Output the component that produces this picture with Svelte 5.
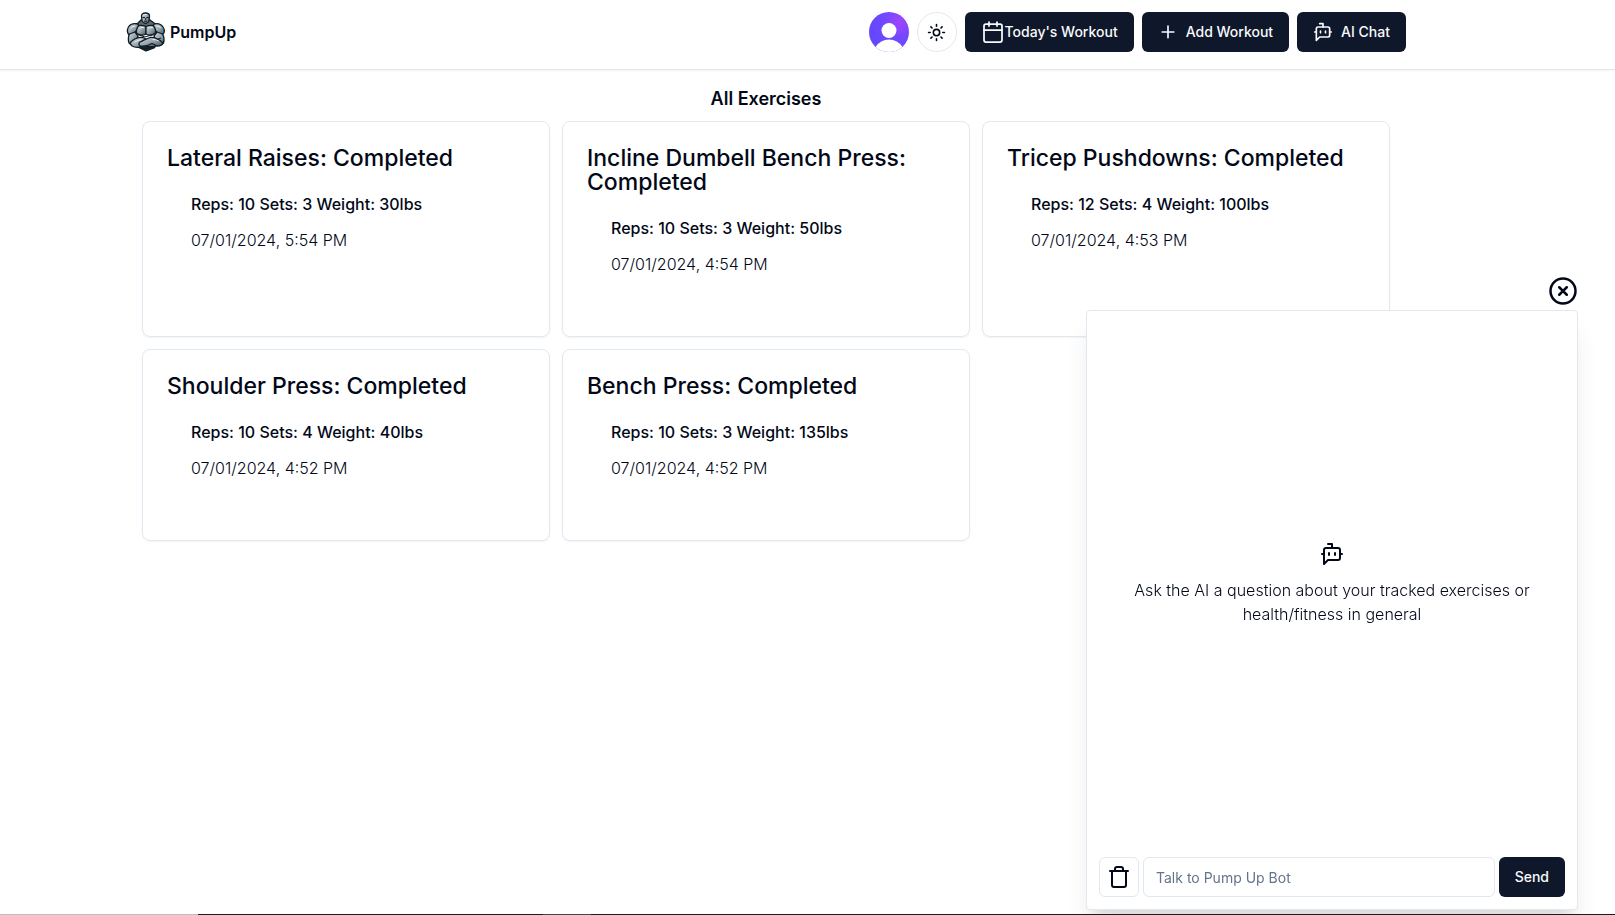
<script>
  const exercises = [
    { name: 'Lateral Raises', reps: 10, sets: 3, weight: 30, date: '07/01/2024, 5:54 PM' },
    { name: 'Incline Dumbell Bench Press', reps: 10, sets: 3, weight: 50, date: '07/01/2024, 4:54 PM' },
    { name: 'Tricep Pushdowns', reps: 12, sets: 4, weight: 100, date: '07/01/2024, 4:53 PM' },
    { name: 'Shoulder Press', reps: 10, sets: 4, weight: 40, date: '07/01/2024, 4:52 PM' },
    { name: 'Bench Press', reps: 10, sets: 3, weight: 135, date: '07/01/2024, 4:52 PM' }
  ];
  let chatOpen = $state(true);
  let message = $state('');
</script>

{#snippet bot(size)}
  <svg class="icon" width={size} height={size} viewBox="0 0 24 24" aria-hidden="true">
    <path d="M12 6V2H8" />
    <path d="m8 18-4 4V8a2 2 0 0 1 2-2h12a2 2 0 0 1 2 2v8a2 2 0 0 1-2 2Z" />
    <path d="M2 12h2M9 11v2M15 11v2M20 12h2" />
  </svg>
{/snippet}

<div class="page">
  <header>
    <nav class="container">
      <a class="brand" href="#home">
        <svg width="40" height="40" viewBox="0 0 40 40" aria-hidden="true">
          <defs>
            <linearGradient id="steel" x1="0" y1="0" x2="1" y2="1">
              <stop offset="0" stop-color="#d3dade" />
              <stop offset="0.5" stop-color="#98a5ae" />
              <stop offset="1" stop-color="#43525d" />
            </linearGradient>
          </defs>
          <g fill="url(#steel)" stroke="#111c24" stroke-width="1.300" stroke-linejoin="round">
            <path d="M7 28 12 35 20 39 28 36 34 28Z" fill="#16232c" />
            <path d="M15 8 12 11 7 13 15 17 25 17 33 13 28 11 24 8Z" fill="#5b6973" />
            <path d="M15.500 4Q15.500 1 19.500 1T23.500 4L23 9Q21.500 11.500 19.500 11.500T16 9Z" />
            <path d="M12 12Q5 10.500 2.500 15T3 23Q9 22 13 15Z" />
            <path d="M28 12Q34 10.500 37 15T36.500 23Q31 22 27 15Z" />
            <path d="M13 13.500Q17 13 20 14.500V22Q15 25 10.500 21 10 16 13 13.500Z" />
            <path d="M27 13.500Q23 13 20 14.500V22Q25 25 29.500 21 30 16 27 13.500Z" />
            <path d="M3.500 22Q1.500 26 3 31 5 34 9 33L12 24 9 20Z" />
            <path d="M36.500 22Q39 26 37.500 31 35 34 31 33L28 24 31 20Z" />
            <path d="M4 31Q9 25 17 25.500L26 30 31 33.500Q25 36 19 33.500 11 37 6 34Z" />
            <path d="M37 31Q31 25 24 25.500L14 30Q12 32 14 34 20 35 26 31.500L31 34Q36 34 37 31Z" />
          </g>
          <g fill="none" stroke="#111c24" stroke-width="1">
            <path d="M16.500 5.500h2.500M20.500 5.500H23M18 9.200h3M19.700 6v2M12 22.500l7 2.500 8-2.500M19 27l-4 3M30 28l5-2M13 35.500l6 1.500 7-2" />
          </g>
          <g fill="none" stroke="#eef2f4" stroke-width="1" stroke-linecap="round">
            <path d="M17.500 3q1.500-1 3-.5M5 16q1.500-2 4-2M14 16q2-1 3.500-.5M23 16q2-1 3.500-.5M31 14q2 0 3.500 1.500M9 30q3-2 6-2.500M27 27.500q3 0 5 1" />
          </g>
        </svg>
        <span>PumpUp</span>
      </a>

      <div class="actions">
        <button class="avatar" aria-label="Open user menu">
          <svg width="40" height="40" viewBox="0 0 40 40" aria-hidden="true">
            <defs>
              <radialGradient id="violet" cx="31" cy="10" r="30" gradientUnits="userSpaceOnUse">
                <stop offset="0" stop-color="#a044ff" />
                <stop offset="0.55" stop-color="#7048ff" />
                <stop offset="1" stop-color="#6547ff" />
              </radialGradient>
              <clipPath id="round"><circle cx="20" cy="20" r="20" /></clipPath>
            </defs>
            <g clip-path="url(#round)">
              <path fill="url(#violet)" d="M0 0h40v40H0z" />
              <circle cx="20" cy="18.500" r="7.500" fill="#fff" />
              <path d="M6.500 35Q11.500 27.500 20 27.500T33.500 35V40H6.500Z" fill="#fff" />
            </g>
          </svg>
        </button>
        <button class="theme" aria-label="Toggle theme">
          <svg class="icon" width="19" height="19" viewBox="0 0 24 24" aria-hidden="true">
            <circle cx="12" cy="12" r="4" />
            <path d="M12 2v2M12 20v2M4.930 4.930l1.410 1.410M17.660 17.660l1.410 1.410M2 12h2M20 12h2M6.340 17.660l-1.410 1.410M19.070 4.930l-1.410 1.410" />
          </svg>
        </button>
        <button class="primary">
          <svg class="icon thin" width="24" height="24" viewBox="0 0 24 24" aria-hidden="true">
            <path d="M8 2v4M16 2v4M3 10h18" />
            <rect x="3" y="4" width="18" height="18" rx="2" />
          </svg>
          Today's Workout
        </button>
        <button class="primary spaced">
          <svg class="icon" width="20" height="20" viewBox="0 0 24 24" aria-hidden="true">
            <path d="M5 12h14M12 5v14" />
          </svg>
          Add Workout
        </button>
        <button class="primary spaced" onclick={() => (chatOpen = true)}>
          {@render bot(20)}
          AI Chat
        </button>
      </div>
    </nav>
  </header>

  <main class="container">
    <h1>All Exercises</h1>
    <div class="grid">
      {#each exercises as item}
        <article>
          <h2>{item.name}: Completed</h2>
          <div class="details">
            <p class="stats">Reps: {item.reps} Sets: {item.sets} Weight: {item.weight}lbs</p>
            <p class="date">{item.date}</p>
          </div>
        </article>
      {/each}
    </div>
  </main>
</div>

{#if chatOpen}
  <aside class="chat">
    <button class="close" aria-label="Close chat" onclick={() => (chatOpen = false)}>
      <svg class="icon" width="30" height="30" viewBox="0 0 24 24" aria-hidden="true">
        <circle cx="12" cy="12" r="10" />
        <path d="m15 9-6 6M9 9l6 6" />
      </svg>
    </button>
    <section class="panel">
      <div class="empty">
        {@render bot(24)}
        <p>Ask the AI a question about your tracked exercises or health/fitness in general</p>
      </div>
      <form onsubmit={(e) => e.preventDefault()}>
        <button type="button" class="clear" aria-label="Clear chat" onclick={() => (message = '')}>
          <svg class="icon" width="24" height="24" viewBox="0 0 24 24" aria-hidden="true">
            <path d="M3 6h18M19 6v14c0 1-1 2-2 2H7c-1 0-2-1-2-2V6M8 6V4c0-1 1-2 2-2h4c1 0 2 1 2 2v2" />
          </svg>
        </button>
        <input type="text" aria-label="Message" placeholder="Talk to Pump Up Bot" bind:value={message} />
        <button class="primary">Send</button>
      </form>
    </section>
  </aside>
{/if}
<div class="edge"></div>

<style>
  :global(body) {
    background: #fff;
    color: #020817;
    font: 16px/24px Inter, sans-serif;
  }
  :global(*) {
    box-sizing: border-box;
  }
  h1, h2, p {
    margin: 0;
  }
  button, input {
    font: inherit;
    color: inherit;
  }
  button {
    display: flex;
    align-items: center;
    justify-content: center;
    flex: none;
    padding: 0;
    border: 0;
    background: none;
    cursor: pointer;
  }
  .icon {
    flex: none;
    fill: none;
    stroke: currentColor;
    stroke-width: 2;
    stroke-linecap: round;
    stroke-linejoin: round;
  }
  .thin {
    stroke-width: 1.75;
  }
  header {
    padding: 12px 83px 17px 0;
    border-bottom: 1px solid #e5e7eb;
    box-shadow: 0 1px 2px rgb(0 0 0 / 5%);
  }
  .container {
    max-width: 1280px;
    margin: 0 auto;
  }
  nav {
    display: flex;
    align-items: center;
    justify-content: space-between;
  }
  .brand {
    display: flex;
    align-items: center;
    gap: 4px;
    color: inherit;
    font-weight: 600;
    text-decoration: none;
  }
  .actions {
    display: flex;
    gap: 8px;
  }
  .avatar, .theme {
    width: 40px;
    height: 40px;
    border-radius: 50%;
  }
  .theme, .clear {
    border: 1px solid #e2e8f0;
  }
  .primary {
    height: 40px;
    padding: 0 16px;
    border-radius: 6px;
    background: #0f172a;
    color: #f8fafc;
    font-size: 14px;
    line-height: 20px;
    font-weight: 500;
    white-space: nowrap;
  }
  .spaced {
    gap: 8px;
  }
  .page main {
    max-width: 1363px;
    padding: 15px 99px 16px 16px;
  }
  h1 {
    font-size: 18px;
    line-height: 28px;
    font-weight: 600;
    text-align: center;
  }
  .grid {
    display: grid;
    grid-template-columns: repeat(3, 1fr);
    gap: 12px;
    padding-top: 8px;
  }
  article {
    padding: 24px;
    border: 1px solid #e2e8f0;
    border-radius: 8px;
    box-shadow: 0 1px 2px rgb(0 0 0 / 5%);
  }
  h2 {
    font-size: 23px;
    line-height: 24px;
    font-weight: 500;
  }
  .details {
    padding: 22px 24px 36px;
  }
  .stats {
    font-weight: 500;
  }
  .date {
    margin-top: 12px;
    font-weight: 300;
  }
  .chat {
    position: fixed;
    right: 37px;
    bottom: 5px;
    z-index: 10;
    width: 100%;
    max-width: 492px;
  }
  .close {
    margin: 0 0 4px auto;
  }
  .panel {
    display: flex;
    flex-direction: column;
    height: 600px;
    border: 1px solid #e2e8f0;
    border-radius: 4px;
    background: #fff;
    box-shadow: 0 20px 25px -5px rgb(0 0 0 / 10%), 0 8px 10px -6px rgb(0 0 0 / 10%);
  }
  .empty {
    display: flex;
    flex: 1;
    flex-direction: column;
    align-items: center;
    justify-content: center;
    gap: 12px;
    padding: 12px 32px 0;
    text-align: center;
    font-weight: 300;
  }
  form {
    display: flex;
    gap: 4px;
    padding: 12px;
  }
  .clear {
    width: 40px;
    height: 40px;
    border-radius: 6px;
  }
  input {
    flex: 1;
    min-width: 0;
    height: 40px;
    padding: 0 12px;
    border: 1px solid #e2e8f0;
    border-radius: 6px;
    background: #fff;
    font-size: 14px;
  }
  input::placeholder {
    color: #64748b;
    opacity: 1;
  }
  .edge {
    position: fixed;
    inset: auto 0 0;
    z-index: 20;
    height: 1px;
    background: linear-gradient(90deg, #c0c0c0 198px, #1c1c1c 198px 543px, #484848 543px 591px, #1c1c1c 591px);
  }
</style>
